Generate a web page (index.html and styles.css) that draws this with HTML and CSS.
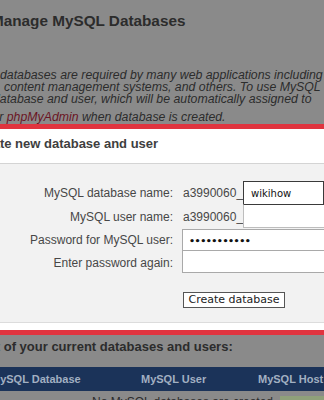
FILE: index.html
```html
<!DOCTYPE html>
<html lang="en">
<head>
<meta charset="utf-8">
<title>Manage MySQL Databases</title>
<link rel="stylesheet" href="styles.css">
</head>
<body>
<div class="page">
  <h1 class="title">Manage MySQL Databases</h1>
  <div class="intro">
    <div class="line l1">databases are required by many web applications including</div>
    <div class="line l2">content management systems, and others. To use MySQL</div>
    <div class="line l3">database and user, which will be automatically assigned to</div>
    <div class="line l4">for <a class="link" href="#">phpMyAdmin</a> when database is created.</div>
  </div>

  <section class="panel">
    <h2 class="panel-title">Create new database and user</h2>
    <form class="form">
      <div class="grid">
        <label class="lbl r1">MySQL database name:</label>
        <div class="val r1"><span class="prefix">a3990060_</span><input class="inp inp-focus" type="text" value="wikihow"></div>
        <label class="lbl r2">MySQL user name:</label>
        <div class="val r2"><span class="prefix">a3990060_</span><input class="inp inp-user" type="text" value=""></div>
        <label class="lbl r3">Password for MySQL user:</label>
        <div class="val r3"><input class="inp inp-pass" type="password" value="wikihow123!"></div>
        <label class="lbl r4">Enter password again:</label>
        <div class="val r4"><input class="inp inp-pass inp-again" type="password" value=""></div>
      </div>
      <div class="actions"><button class="btn" type="button">Create database</button></div>
    </form>
  </section>

  <h2 class="list-title">List of your current databases and users:</h2>
  <div class="table">
    <div class="thead">
      <div class="th">MySQL Database</div>
      <div class="th">MySQL User</div>
      <div class="th">MySQL Host</div>
    </div>
    <div class="trow">
      <div class="empty">No MySQL databases are created</div>
      <div class="green"></div>
    </div>
  </div>
</div>
</body>
</html>
```

FILE: styles.css
```css
html, body {
  margin: 0;
  padding: 0;
  width: 324px;
  height: 400px;
  overflow: hidden;
  background: #8a8a8a;
}
.page {
  font-family: "Liberation Sans", Arial, sans-serif;
  color: #2c2c2c;
  padding-top: 12px;
}
.title {
  margin: 0 0 0 -9px;
  font-size: 15.3px;
  line-height: 18px;
  font-weight: bold;
  white-space: nowrap;
}
.intro {
  margin-top: 39px;
  font-style: italic;
  font-size: 12.3px;
  line-height: 12px;
  white-space: nowrap;
}
.line { height: 12px; }
.l1 { margin-left: 0; }
.l2 { margin-left: 4px; }
.l3 { margin-left: -7px; }
.l4 { margin-left: -11px; margin-top: 6px; }
.link { color: #6a1424; text-decoration: none; }

.panel {
  margin-top: 1px;
  background: #ffffff;
  border-top: 5px solid #e0343f;
  border-bottom: 5px solid #e0343f;
  padding-bottom: 7px;
}
.panel-title {
  margin: 0 0 0 -29px;
  padding: 7px 0 11px;
  font-size: 13px;
  line-height: 16px;
  font-weight: bold;
  color: #3e3e3e;
  white-space: nowrap;
  border-bottom: 1px solid #d4d4d4;
}
.form {
  margin: 0;
  background: #f2f2f2;
  padding: 17px 0 14px;
  border-bottom: 1px solid #dcdcdc;
}
.grid {
  display: grid;
  grid-template-columns: 173px 1fr;
  grid-template-rows: 24px 23px 23px 23px;
  column-gap: 9px;
}
.lbl {
  font-size: 12px;
  color: #474747;
  text-align: right;
  white-space: nowrap;
  align-self: center;
}
.val {
  display: flex;
  align-items: flex-start;
  white-space: nowrap;
  min-width: 0;
}
.prefix {
  font-size: 12px;
  color: #474747;
  padding-left: 1px;
  align-self: center;
}
.inp {
  box-sizing: border-box;
  margin: 0;
  padding: 0 0 0 7px;
  background: #ffffff;
  font-family: "DejaVu Sans", Verdana, sans-serif;
  font-size: 10px;
  color: #111111;
  outline: none;
  border-radius: 0;
  flex: none;
}
.inp-focus {
  width: 81px;
  height: 24px;
  border: 1px solid #3a3a3a;
}
.inp-user {
  width: 90px;
  height: 24px;
  margin-top: -1px;
  border: 1px solid #bdbdbd;
  border-top-color: #3a3a3a;
}
.inp-pass {
  width: 160px;
  height: 22px;
  margin-top: 1px;
  border: 1px solid #a9a9a9;
  padding-left: 6px;
  font-size: 9.5px;
  font-weight: bold;
  letter-spacing: -0.5px;
}
.inp-again {
  height: 23px;
  margin-top: -1px;
}
.actions {
  margin-top: 18px;
  padding-left: 183px;
}
.btn {
  box-sizing: border-box;
  height: 16px;
  width: 102px;
  margin: 0;
  padding: 0;
  border: 1px solid #555555;
  border-radius: 0;
  background: #ffffff;
  font-family: "DejaVu Sans", Verdana, sans-serif;
  font-size: 11px;
  line-height: 14px;
  color: #222222;
  display: block;
}

.list-title {
  margin: 4px 0 0 -23px;
  font-size: 13px;
  line-height: 16px;
  font-weight: bold;
  color: #2c2c2c;
  white-space: nowrap;
}
.table {
  margin-top: 12px;
}
.thead {
  display: grid;
  grid-template-columns: 150px 117px auto;
  height: 24px;
  align-items: center;
  background: #1b3359;
  margin-left: -9px;
  white-space: nowrap;
}
.th {
  font-size: 11px;
  font-weight: bold;
  color: #a2b0c2;
}
.trow {
  display: flex;
  height: 20px;
  position: relative;
  white-space: nowrap;
}
.empty {
  padding-left: 92px;
  padding-top: 4px;
  font-size: 12px;
  line-height: 14px;
  color: #2c2c2c;
}
.green {
  position: absolute;
  left: 280px;
  top: 5px;
  width: 60px;
  height: 20px;
  background: #8fa07a;
}
```
